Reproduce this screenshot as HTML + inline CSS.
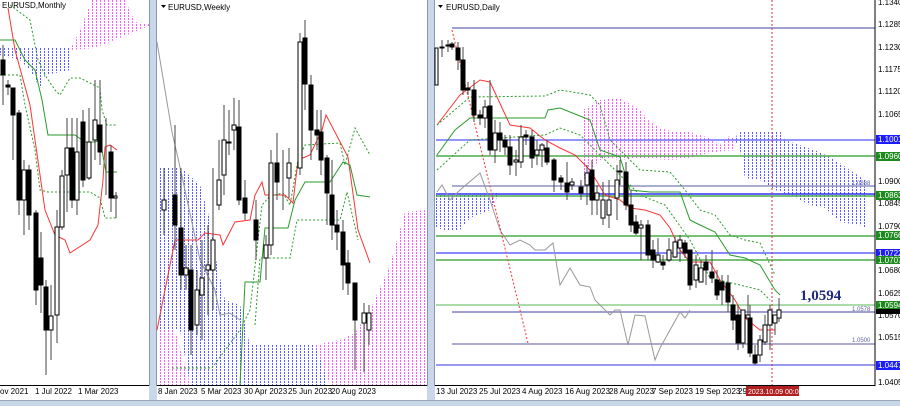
<!DOCTYPE html>
<html><head><meta charset="utf-8"><style>
html,body{margin:0;padding:0;background:#fff;}
.w{position:relative;width:900px;height:406px;overflow:hidden}
.c{position:absolute;left:0;top:0;width:900px;height:406px}
.b{background:repeating-linear-gradient(90deg,#5a5aff 0 1px,transparent 1px 4px)}
.m{background:repeating-linear-gradient(90deg,#ff5aff 0 1px,transparent 1px 4px)}
.d{-webkit-mask-image:repeating-linear-gradient(180deg,#000 0 2px,transparent 2px 3px);mask-image:repeating-linear-gradient(180deg,#000 0 2px,transparent 2px 3px)}
svg{display:block;position:absolute;left:0;top:0}
text{font-family:"Liberation Sans",sans-serif;font-size:8px;fill:#000}
</style></head><body><div class="w">
<div class="c m d" style="clip-path:polygon(70px 50px,80px 30px,92px 0px,125px 0px,135px 22px,149px 24px,149px 26px,95px 48px,70px 50px)"></div>
<div class="c b d" style="clip-path:polygon(0px 48px,70px 48px,70px 70px,45px 75px,40px 88px,30px 70px,20px 60px,0px 55px)"></div>
<div class="c b d" style="clip-path:polygon(158px 167px,180px 167px,200px 185px,210px 220px,215px 255px,225px 300px,240px 305px,250px 345px,320px 345px,328px 385px,190px 385px,180px 330px,158px 330px)"></div>
<div class="c m d" style="clip-path:polygon(158px 330px,175px 330px,190px 385px,158px 385px)"></div>
<div class="c m d" style="clip-path:polygon(315px 345px,340px 340px,355px 333px,370px 310px,390px 265px,405px 212px,427px 210px,427px 385px,330px 385px)"></div>
<div class="c m d" style="clip-path:polygon(583px 110px,600px 100px,620px 98px,640px 110px,650px 122px,660px 128px,675px 132px,690px 132px,710px 138px,720px 145px,730px 135px,735px 140px,735px 150px,715px 152px,700px 155px,690px 158px,670px 160px,640px 158px,620px 160px,610px 158px,600px 160px,590px 170px,580px 185px,583px 160px)"></div>
<div class="c b d" style="clip-path:polygon(735px 140px,738px 132px,780px 131px,785px 140px,820px 152px,835px 160px,850px 170px,865px 180px,868px 230px,860px 225px,840px 222px,825px 208px,810px 205px,790px 195px,775px 190px,760px 180px,745px 178px,740px 150px)"></div>
<div class="c b d" style="clip-path:polygon(436px 195px,490px 195px,500px 192px,490px 210px,470px 218px,460px 230px,445px 230px,436px 228px)"></div>
<svg width="900" height="406" viewBox="0 0 900 406" xmlns="http://www.w3.org/2000/svg">

<!-- ===== MONTHLY ===== -->
<polyline points="8,8 15,50 30,105 45,210 55,235 65,240 70,253 90,240 98,225 103,180 105,147 110,145 117,150" fill="none" stroke="#f33" stroke-width="1"/>
<polyline points="0,40 15,40 25,60 35,70 42,100 48,135 75,135 85,142 95,142 100,140 106,172 117,172" fill="none" stroke="#2a9a2a" stroke-width="1"/>
<polyline points="10,5 30,20 38,60 45,75 55,90 60,95 70,78 80,78 100,88 102,110 107,125 117,125" fill="none" stroke="#2a9a2a" stroke-dasharray="2,2"/>
<polyline points="0,75 20,75 25,105 35,150 40,190 48,192 90,192 100,198 105,218 117,218" fill="none" stroke="#2a9a2a" stroke-dasharray="2,2"/>
<path d="M3,45V105M8,80V95M13,88V160M19,110V215M24,160V235M29,165V230M36,210V305M41,232V313M46,280V375M51,285V360M57,210V343M62,170V230M67,118V212M72,118V208M77,118V215M83,110V187M89,108V180M95,80V160M100,80V165M106,118V195M111,145V212M116,192V218" stroke="#444" stroke-width="1"/>
<g stroke="#000" stroke-width="1">
<rect x="1" y="60" width="4" height="15" fill="#000"/><rect x="6" y="85" width="4" height="2" fill="#000"/>
<rect x="11" y="88" width="4" height="27" fill="#000"/><rect x="17" y="113" width="4" height="87" fill="#000"/>
<rect x="22" y="170" width="4" height="30" fill="#fff"/><rect x="27" y="170" width="4" height="45" fill="#000"/>
<rect x="34" y="213" width="4" height="77" fill="#000"/><rect x="39" y="258" width="4" height="27" fill="#000"/>
<rect x="44" y="287" width="4" height="43" fill="#000"/><rect x="49" y="316" width="4" height="14" fill="#fff"/>
<rect x="55" y="227" width="4" height="88" fill="#fff"/><rect x="60" y="176" width="4" height="51" fill="#fff"/>
<rect x="65" y="148" width="4" height="27" fill="#fff"/><rect x="70" y="148" width="4" height="52" fill="#000"/>
<rect x="75" y="152" width="4" height="48" fill="#fff"/><rect x="81" y="122" width="4" height="58" fill="#000"/>
<rect x="87" y="142" width="4" height="36" fill="#fff"/><rect x="93" y="120" width="4" height="20" fill="#fff"/>
<rect x="98" y="125" width="4" height="27" fill="#000"/><rect x="109" y="152" width="4" height="46" fill="#000"/>
<rect x="114" y="196" width="3" height="2" fill="#fff"/>
</g>
<text x="2" y="8" font-size="8">EURUSD,Monthly</text>

<!-- separator 1 -->
<rect x="149" y="0" width="8" height="406" fill="#c8d8ea"/><rect x="149" y="0" width="1" height="406" fill="#8a98a8"/><rect x="156" y="0" width="1" height="406" fill="#8a98a8"/>

<!-- ===== WEEKLY ===== -->
<polyline points="157,42 172,132 180,167 200,260 215,290 220,315 230,313 240,320" fill="none" stroke="#999" stroke-width="1"/>
<polyline points="157,330 175,240 198,240 205,233 220,235 223,245 235,222 250,220 255,195 262,182 265,195 285,195 293,203 298,160 310,155 322,130 326,115 348,157 358,230 370,263" fill="none" stroke="#f33"/>
<polyline points="240,385 245,282 260,282 265,228 288,228 295,200 305,182 330,182 343,162 350,165 357,195 370,197" fill="none" stroke="#2a9a2a"/>
<polyline points="172,368 212,368 240,330 250,310 262,205 270,196 283,193 290,205 298,160 305,145 340,143 345,165 355,128 370,155" fill="none" stroke="#2a9a2a" stroke-dasharray="2,2"/>
<polyline points="255,325 260,258 290,258 297,220 340,220 347,192 358,240" fill="none" stroke="#2a9a2a" stroke-dasharray="2,2"/>
<path d="M164,168V235M175,125V250M181,168V290M186,245V290M191,245V355M197,270V335M202,240V340M208,225V315M213,168V310M219,140V210M224,105V195M229,110V155M234,98V150M239,100V205M245,180V220M256,200V260M266,235V280M271,150V255M277,133V200M283,150V210M289,148V198M300,33V175M305,20V110M311,75V160M317,110V150M321,110V175M327,155V225M332,160V240M337,210V250M343,220V290M348,250V295M355,283V370M364,303V372M369,305V345" stroke="#444"/>
<g stroke="#000">
<rect x="162" y="200" width="4" height="10" fill="#fff"/><rect x="173" y="195" width="4" height="30" fill="#000"/>
<rect x="179" y="228" width="4" height="47" fill="#000"/><rect x="184" y="268" width="4" height="7" fill="#fff"/>
<rect x="189" y="270" width="4" height="60" fill="#000"/><rect x="195" y="290" width="4" height="35" fill="#fff"/>
<rect x="200" y="278" width="4" height="17" fill="#fff"/><rect x="206" y="265" width="4" height="5" fill="#fff"/>
<rect x="211" y="240" width="4" height="30" fill="#fff"/><rect x="217" y="180" width="4" height="25" fill="#fff"/>
<rect x="222" y="140" width="4" height="35" fill="#fff"/><rect x="227" y="142" width="4" height="1" fill="#000"/>
<rect x="232" y="125" width="4" height="5" fill="#fff"/><rect x="237" y="127" width="4" height="73" fill="#000"/>
<rect x="243" y="198" width="4" height="15" fill="#000"/><rect x="254" y="220" width="4" height="20" fill="#000"/>
<rect x="264" y="245" width="4" height="13" fill="#fff"/><rect x="269" y="163" width="4" height="82" fill="#fff"/>
<rect x="275" y="163" width="4" height="19" fill="#000"/><rect x="287" y="163" width="4" height="15" fill="#fff"/>
<rect x="298" y="42" width="4" height="126" fill="#fff"/><rect x="303" y="38" width="4" height="46" fill="#000"/>
<rect x="309" y="85" width="4" height="45" fill="#000"/><rect x="315" y="130" width="4" height="5" fill="#000"/>
<rect x="319" y="132" width="4" height="28" fill="#000"/><rect x="325" y="158" width="4" height="35" fill="#000"/>
<rect x="330" y="195" width="4" height="30" fill="#000"/><rect x="335" y="225" width="4" height="7" fill="#000"/>
<rect x="341" y="232" width="4" height="33" fill="#000"/><rect x="346" y="263" width="4" height="20" fill="#000"/>
<rect x="353" y="283" width="4" height="37" fill="#000"/><rect x="362" y="313" width="4" height="10" fill="#fff"/>
<rect x="367" y="313" width="4" height="17" fill="#fff"/>
</g>
<text x="168" y="10" font-size="8">EURUSD,Weekly</text>
<path d="M161,5h5l-2.5,3z" fill="#000"/>

<!-- separator 2 -->
<rect x="427" y="0" width="8" height="406" fill="#c8d8ea"/><rect x="427" y="0" width="1" height="406" fill="#8a98a8"/><rect x="434" y="0" width="1" height="406" fill="#8a98a8"/>

<!-- ===== DAILY ===== -->
<g stroke-width="1.5">
<line x1="452" y1="28" x2="875" y2="28" stroke="#8080c0"/>
<line x1="436" y1="140" x2="875" y2="140" stroke="#7070ff"/>
<line x1="436" y1="156" x2="875" y2="156" stroke="#4caa4c"/>
<line x1="452" y1="186" x2="875" y2="186" stroke="#9090c0"/>
<line x1="436" y1="194" x2="875" y2="194" stroke="#3030ff"/>
<line x1="436" y1="196" x2="875" y2="196" stroke="#4caa4c"/>
<line x1="436" y1="236" x2="875" y2="236" stroke="#4caa4c"/>
<line x1="436" y1="253" x2="875" y2="253" stroke="#6060ff"/>
<line x1="436" y1="260" x2="875" y2="260" stroke="#4caa4c"/>
<line x1="436" y1="305" x2="875" y2="305" stroke="#8fcf8f"/>
<line x1="452" y1="312" x2="875" y2="312" stroke="#8080c0"/>
<line x1="452" y1="344" x2="875" y2="344" stroke="#9090c0"/>
<line x1="436" y1="365" x2="875" y2="365" stroke="#3030e0" stroke-width="1"/>
</g>
<polyline points="437,192 442,185 450,200 460,190 480,173 490,200 500,230 510,245 520,240 530,245 535,250 545,250 553,243 560,285 570,268 580,285 590,287 595,300 600,305 610,315 615,310 620,310 628,345 635,315 645,316 655,360 660,348 670,330 680,312 685,318 690,310" fill="none" stroke="#999"/>
<line x1="452" y1="30" x2="528" y2="343" stroke="#f33" stroke-dasharray="2,2"/>
<line x1="772" y1="0" x2="772" y2="385" stroke="#d33" stroke-dasharray="2,2"/>
<polyline points="437,125 460,95 480,80 490,82 510,125 530,128 545,140 560,148 575,155 590,170 605,195 620,200 630,208 645,210 660,215 670,228 680,250 690,262 710,262 720,280 735,300 745,318 760,330 768,330" fill="none" stroke="#f33"/>
<polyline points="437,155 455,130 470,118 545,118 548,110 560,108 590,120 600,150 620,157 630,190 650,192 680,192 690,220 700,225 715,232 730,255 745,258 760,265 775,290 780,295" fill="none" stroke="#2a9a2a"/>
<polyline points="437,125 470,97 545,96 560,90 590,95 600,105 610,140 640,170 670,172 685,190 700,210 715,215 730,235 745,240 760,243 775,275" fill="none" stroke="#2a9a2a" stroke-dasharray="2,2"/>
<polyline points="437,170 470,140 545,135 560,128 580,135 610,165 640,195 665,205 690,240 710,278 740,285 760,290 770,300" fill="none" stroke="#2a9a2a" stroke-dasharray="2,2"/>
<line x1="766" y1="330" x2="775" y2="330" stroke="#f33"/>
<path d="M442,40V57M448,40V52M452,42V50M458,42V70M463,47V95M468,82V95M474,80V122M480,110V125M485,100V128M490,80V155M495,120V163M500,122V152M505,135V155M510,135V175M516,150V176M521,125V168M526,130V145M532,130V168M537,140V165M542,143V167M547,140V165M554,158V192M561,175V190M567,162V200M572,178V190M581,180V200M587,165V205M592,160V215M597,185V215M603,182V225M609,180V228M617,165V220M620,160V185M626,162V210M631,190V232M636,215V235M641,220V260M648,220V260M653,240V268M658,238V263M663,255V270M669,238V262M675,237V258M680,235V262M685,240V258M690,250V290M696,255V288M701,260V282M706,255V285M712,250V283M717,270V300M722,275V305M728,275V312M733,295V330M738,305V350M743,310V348M748,295V322M750,305V357M755,345V365M760,335V362M765,315V345M770,305V350M775,315V335M779,298V322" stroke="#444"/>
<g stroke="#000">
<rect x="435" y="48" width="3" height="37" fill="#fff"/>
<rect x="440" y="47" width="4" height="1" fill="#000"/><rect x="446" y="45" width="4" height="1" fill="#000"/>
<rect x="450" y="44" width="4" height="3" fill="#000"/><rect x="456" y="48" width="4" height="12" fill="#000"/>
<rect x="461" y="60" width="4" height="30" fill="#000"/><rect x="466" y="88" width="4" height="2" fill="#000"/>
<rect x="472" y="90" width="4" height="25" fill="#000"/><rect x="478" y="115" width="4" height="3" fill="#000"/>
<rect x="483" y="107" width="4" height="11" fill="#fff"/><rect x="488" y="106" width="4" height="44" fill="#000"/>
<rect x="493" y="133" width="4" height="17" fill="#fff"/><rect x="498" y="133" width="4" height="7" fill="#000"/>
<rect x="503" y="140" width="4" height="7" fill="#000"/><rect x="508" y="147" width="4" height="18" fill="#000"/>
<rect x="514" y="160" width="4" height="2" fill="#fff"/><rect x="519" y="137" width="4" height="25" fill="#fff"/>
<rect x="524" y="135" width="4" height="2" fill="#000"/><rect x="530" y="137" width="4" height="21" fill="#000"/>
<rect x="535" y="150" width="4" height="5" fill="#fff"/><rect x="540" y="145" width="4" height="5" fill="#fff"/>
<rect x="545" y="148" width="4" height="14" fill="#000"/><rect x="552" y="160" width="4" height="20" fill="#000"/>
<rect x="559" y="178" width="4" height="4" fill="#000"/><rect x="565" y="183" width="4" height="9" fill="#000"/>
<rect x="570" y="182" width="4" height="3" fill="#fff"/><rect x="579" y="187" width="4" height="6" fill="#000"/>
<rect x="585" y="173" width="4" height="12" fill="#fff"/><rect x="590" y="170" width="4" height="30" fill="#000"/>
<rect x="595" y="193" width="4" height="7" fill="#fff"/><rect x="601" y="200" width="4" height="18" fill="#fff"/>
<rect x="607" y="200" width="4" height="15" fill="#fff"/><rect x="615" y="180" width="4" height="18" fill="#fff"/>
<rect x="618" y="171" width="4" height="1" fill="#000"/><rect x="624" y="172" width="4" height="33" fill="#000"/>
<rect x="629" y="205" width="4" height="20" fill="#000"/><rect x="634" y="222" width="4" height="11" fill="#000"/>
<rect x="639" y="225" width="4" height="3" fill="#fff"/><rect x="646" y="225" width="4" height="30" fill="#000"/>
<rect x="651" y="250" width="4" height="10" fill="#000"/><rect x="656" y="255" width="4" height="7" fill="#fff"/>
<rect x="661" y="262" width="4" height="3" fill="#000"/><rect x="667" y="250" width="4" height="10" fill="#fff"/>
<rect x="673" y="242" width="4" height="15" fill="#fff"/><rect x="678" y="240" width="4" height="8" fill="#fff"/>
<rect x="683" y="243" width="4" height="10" fill="#000"/><rect x="688" y="250" width="4" height="35" fill="#000"/>
<rect x="694" y="265" width="4" height="15" fill="#fff"/><rect x="699" y="268" width="4" height="14" fill="#fff"/>
<rect x="704" y="262" width="4" height="8" fill="#000"/><rect x="710" y="272" width="4" height="6" fill="#000"/>
<rect x="715" y="280" width="4" height="15" fill="#000"/><rect x="720" y="282" width="4" height="8" fill="#000"/>
<rect x="726" y="283" width="4" height="19" fill="#000"/><rect x="731" y="305" width="4" height="15" fill="#000"/>
<rect x="736" y="315" width="4" height="28" fill="#000"/><rect x="741" y="310" width="4" height="33" fill="#fff"/>
<rect x="746" y="315" width="4" height="3" fill="#fff"/><rect x="748" y="318" width="4" height="35" fill="#000"/>
<rect x="753" y="355" width="4" height="8" fill="#000"/><rect x="758" y="340" width="4" height="15" fill="#fff"/>
<rect x="763" y="325" width="4" height="17" fill="#fff"/><rect x="768" y="310" width="4" height="15" fill="#fff"/>
<rect x="773" y="315" width="4" height="8" fill="#fff"/><rect x="777" y="310" width="4" height="8" fill="#fff"/>
</g>
<text x="446" y="10" font-size="8">EURUSD,Daily</text>
<path d="M438,5h5l-2.5,3z" fill="#000"/>
<text x="800" y="300" style="font-family:'Liberation Serif',serif;font-size:15px;font-weight:bold;fill:#1c2a80">1,0594</text>
<text x="852" y="185" style="fill:#6060a0;font-size:6px">1.0888</text>
<text x="852" y="311" style="fill:#6060a0;font-size:6px">1.0578</text>
<text x="852" y="342" style="fill:#6060a0;font-size:6px">1.0500</text>

<!-- price axis -->
<rect x="875" y="0" width="25" height="400" fill="#fff"/>
<line x1="875" y1="0" x2="875" y2="386" stroke="#000"/>
<g style="font-size:7px">
<text x="878" y="5">1.1340</text><text x="878" y="27">1.1285</text><text x="878" y="50">1.1230</text>
<text x="878" y="72">1.1175</text><text x="878" y="94">1.1120</text><text x="878" y="117">1.1065</text>
<text x="878" y="184">1.0900</text><text x="878" y="206">1.0845</text><text x="878" y="229">1.0790</text>
<text x="878" y="273">1.0680</text><text x="878" y="296">1.0625</text><text x="878" y="318">1.0570</text>
<text x="878" y="340">1.0515</text><text x="878" y="385">1.0405</text>
</g>
<g style="font-size:7px">
<rect x="876" y="135" width="24" height="9" fill="#1c1cff"/><text x="878" y="142" style="fill:#fff">1.1001</text>
<rect x="876" y="152" width="24" height="9" fill="#1e8a1e"/><text x="878" y="159" style="fill:#fff">1.0960</text>
<rect x="876" y="191" width="24" height="9" fill="#1e8a1e"/><text x="878" y="198" style="fill:#fff">1.0863</text>
<rect x="876" y="231" width="24" height="9" fill="#1e8a1e"/><text x="878" y="238" style="fill:#fff">1.0766</text>
<rect x="876" y="249" width="24" height="8" fill="#1c1cff"/><text x="878" y="256" style="fill:#fff">1.0722</text>
<rect x="876" y="256" width="24" height="8" fill="#1e8a1e"/><text x="878" y="263" style="fill:#fff">1.0707</text>
<rect x="876" y="301" width="24" height="9" fill="#1e8a1e"/><text x="878" y="308" style="fill:#fff">1.0594</text>
<rect x="876" y="309" width="24" height="5" fill="#000"/>
<rect x="876" y="361" width="24" height="9" fill="#1c1cff"/><text x="878" y="368" style="fill:#fff">1.0447</text>
</g>

<!-- bottom axes -->
<rect x="0" y="386" width="900" height="14" fill="#fff"/>
<line x1="0" y1="385.5" x2="149" y2="385.5" stroke="#000"/>
<line x1="157" y1="385.5" x2="427" y2="385.5" stroke="#000"/>
<line x1="435" y1="385.5" x2="875" y2="385.5" stroke="#000"/>
<rect x="149" y="386" width="8" height="14" fill="#c8d8ea"/><rect x="427" y="386" width="8" height="14" fill="#c8d8ea"/>
<g style="font-size:7px">
<text x="0" y="394">ov 2021</text><text x="35" y="394">1 Jul 2022</text><text x="78" y="394">1 Mar 2023</text>
<text x="158" y="394">8 Jan 2023</text><text x="201" y="394">5 Mar 2023</text><text x="244" y="394">30 Apr 2023</text>
<text x="288" y="394">25 Jun 2023</text><text x="331" y="394">20 Aug 2023</text>
<text x="436" y="394">13 Jul 2023</text><text x="479" y="394">25 Jul 2023</text><text x="522" y="394">4 Aug 2023</text>
<text x="565" y="394">16 Aug 2023</text><text x="609" y="394">28 Aug 2023</text><text x="652" y="394">7 Sep 2023</text>
<text x="695" y="394">19 Sep 2023</text><text x="738" y="394">29</text>
</g>
<rect x="746" y="386" width="53" height="10" fill="#b02020"/>
<text x="748" y="394" style="font-size:7px;fill:#fff">2023.10.09 00:00</text>
<rect x="0" y="401" width="900" height="5" fill="#c8d8ea"/>
<rect x="0" y="400" width="900" height="1" fill="#9aa8b8"/>
</svg>
</div></body></html>
